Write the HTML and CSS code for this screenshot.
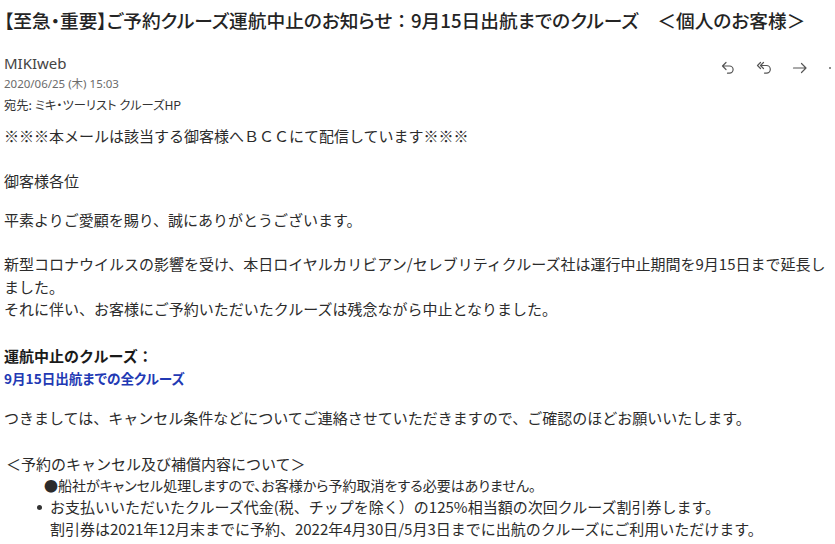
FILE: index.html
```html
<!DOCTYPE html>
<html lang="ja">
<head>
<meta charset="utf-8">
<title>メール</title>
<link rel="stylesheet" href="styles.css">
</head>
<body>
<div class="mail">
  <h1 class="subject">【至急・重要】ご予約クルーズ運航中止のお知らせ<span class="full">：</span>9月15日出航までのクルーズ　＜個人のお客様＞</h1>
  <div class="head">
    <div class="meta">
      <div class="from">MIKIweb</div>
      <div class="date">2020/06/25 (木) 15:03</div>
      <div class="to">宛先: ミキ・ツーリスト クルーズHP</div>
    </div>
    <div class="actions">
      <svg class="icon" viewBox="0 0 16 16"><path d="M6 2.5 L2.5 6 L6 9.5 M2.5 6 H9.5 A3.6 3.6 0 0 1 9.5 13.2 H7.5"/></svg>
      <svg class="icon" viewBox="0 0 16 16"><path d="M7.5 2.5 L4.5 5.5 L7.5 8.5 M4.5 2.5 L1.5 5.5 L4.5 8.5 M4.5 5.5 H10.5 A3.8 3.8 0 0 1 10.5 13.1 H8.5"/></svg>
      <svg class="icon" viewBox="0 0 16 16"><path d="M1.5 8 H14 M9.5 3.5 L14 8 L9.5 12.5"/></svg>
      <svg class="icon more" viewBox="0 0 16 16"><circle cx="2" cy="8" r="1"/><circle cx="8" cy="8" r="1"/><circle cx="14" cy="8" r="1"/></svg>
    </div>
  </div>
  <div class="body">
    <p>※※※本メールは該当する御客様へＢＣＣにて配信しています※※※</p>
    <p class="p-greet">御客様各位</p>
    <p class="p-thanks">平素よりご愛顧を賜り、誠にありがとうございます。</p>
    <p class="p-news">新型コロナウイルスの影響を受け、本日ロイヤルカリビアン/セレブリティクルーズ社は運行中止期間を9月15日まで延長し<br>ました。<br>それに伴い、お客様にご予約いただいたクルーズは残念ながら中止となりました。</p>
    <p class="p-label">運航中止のクルーズ：</p>
    <p class="p-target">9月15日出航までの全クルーズ</p>
    <p class="p-notice">つきましては、キャンセル条件などについてご連絡させていただきますので、ご確認のほどお願いいたします。</p>
    <p class="p-section">＜予約のキャンセル及び補償内容について＞</p>
    <p class="p-item1">●船社がキャンセル処理しますので、お客様から予約取消をする必要はありません。</p>
    <div class="item">
      <span class="dot"></span>
      <p class="item-text">お支払いいただいたクルーズ代金(税、チップを除く）の125%相当額の次回クルーズ割引券します。<br>割引券は2021年12月末までに予約、2022年4月30日/5月3日までに出航のクルーズにご利用いただけます。</p>
    </div>
  </div>
</div>
</body>
</html>
```
FILE: styles.css
```css
html, body {
  margin: 0;
  background: #ffffff;
}

body {
  font-family: "Noto Sans CJK JP", "Noto Sans", sans-serif;
  color: #2b2b2b;
}

.mail {
  padding: 6px 0 0 4px;
  height: 538px;
  overflow: hidden;
}

.subject {
  margin: 0;
  font-size: 18.7px;
  line-height: 28px;
  font-weight: 500;
  font-feature-settings: "palt";
  white-space: nowrap;
  color: #242424;
}

.subject .full {
  font-feature-settings: normal;
}

.head {
  display: flex;
  justify-content: space-between;
  align-items: flex-start;
  margin-top: 19px;
}

.from {
  font-family: "Noto Sans", sans-serif;
  font-size: 15px;
  line-height: 20px;
  color: #444444;
}

.date {
  font-family: "Noto Sans", "Noto Sans CJK JP", sans-serif;
  font-size: 11.5px;
  line-height: 22px;
  color: #6b6b6b;
}

.to {
  font-size: 12.3px;
  line-height: 20px;
  color: #333333;
  font-feature-settings: "palt";
}

.actions {
  display: flex;
  gap: 20px;
  margin-top: 7px;
  margin-right: -9px;
}

.icon {
  width: 16px;
  height: 16px;
  fill: none;
  stroke: #555555;
  stroke-width: 1.2;
  stroke-linecap: round;
  stroke-linejoin: round;
}

.icon.more {
  stroke: none;
  fill: #666666;
}

.body {
  margin-top: 10px;
  font-size: 15px;
  line-height: 22px;
  white-space: nowrap;
}

.body p {
  margin: 0;
}

.body .p-greet { margin-top: 23px; }
.body .p-thanks { margin-top: 17px; }
.body .p-news { margin-top: 22px; line-height: 22.5px; }
.body .p-label { margin-top: 24px; font-weight: 700; color: #1a1a1a; }
.body .p-target { font-weight: 700; color: #2239b4; font-size: 13.6px; font-feature-settings: "palt"; }
.body .p-notice { margin-top: 18px; }
.body .p-section { margin-top: 25px; line-height: 20px; padding-left: 2px; }
.body .p-item1 {
  line-height: 22px;
  padding-left: 40px;
  font-size: 14px;
  font-feature-settings: "palt";
}

.item {
  display: flex;
  align-items: flex-start;
  padding-left: 33px;
}

.dot {
  width: 5px;
  height: 5px;
  border-radius: 50%;
  background: #333333;
  margin: 9px 8px 0 0;
  flex: none;
}

.body .item-text {
  line-height: 22.5px;
}
```
